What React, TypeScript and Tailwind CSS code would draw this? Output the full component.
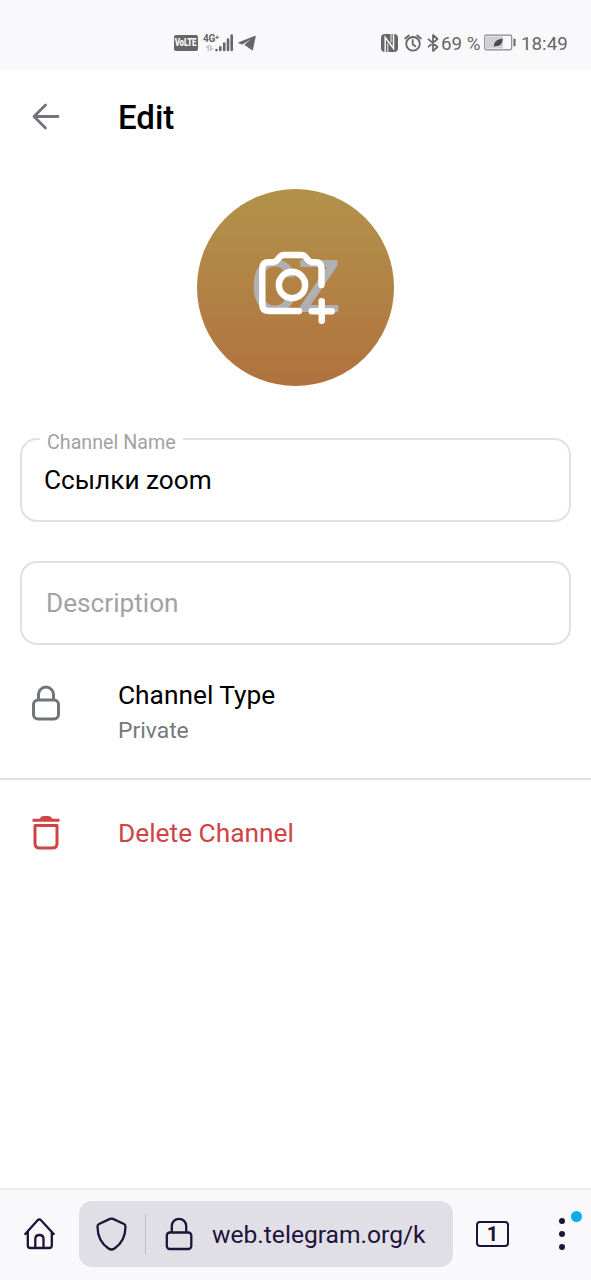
import React from 'react';

const StatusBar: React.FC = () => (
  <div className="h-[70px] bg-[#f9f9fb] flex items-center justify-between pl-[174px] pr-6 pt-4 text-[#666668]">
    <div className="flex items-center">
      <span className="w-6 h-4 rounded-[2px] bg-[#666668] text-[#f9f9fb] flex items-center justify-center leading-none">
        <span className="text-[10px] font-black tracking-tight scale-x-[0.8]">VoLTE</span>
      </span>
      <div className="flex flex-col items-start ml-[5px] w-[15px] h-[19px]">
        <span className="text-[10px] leading-[10px] font-bold tracking-tight whitespace-nowrap">4G⁺</span>
        <svg className="w-[7px] h-[6px] mt-px ml-[3px]" viewBox="0 0 7 6" fill="none" stroke="#b5b5b8" strokeWidth="1.2">
          <path d="M2.2 6V.8L.5 2.6M4.8 0v5.2l1.7-1.8" />
        </svg>
      </div>
      <svg className="w-[18px] h-[18px] -ml-[3px]" viewBox="0 0 18 18" stroke="currentColor" strokeWidth="2.6" strokeLinecap="round">
        <path d="M1.5 16v.1M5.3 13.2v2.8M9.2 9.5v6.5M13 5.5v10.5M16.7 1.5v14.5" />
      </svg>
      <svg className="w-[18px] h-[16px] ml-[5px]" viewBox="0 0 18 16" fill="currentColor">
        <path d="M17 .8c.6-.2.9.2.7.8L15 14.6c-.2.7-.8.8-1.3.4L6.3 9.8 13 4.2 4.2 9.4.8 8.300C.1 8 .1 7.500.8 7.200z" />
      </svg>
    </div>
    <div className="flex items-center text-[18.8px] leading-none">
      <svg className="w-[17px] h-[18px]" viewBox="0 0 17 18">
        <rect width="17" height="18" rx="4" fill="currentColor" />
        <path d="M4.200 18V3.500l8.300 11V0" fill="none" stroke="#f9f9fb" strokeWidth="1.5" />
        <path d="M6.800 18V9.500M10 0v8.500" fill="none" stroke="#f9f9fb" strokeWidth="1" />
      </svg>
      <svg className="w-[18px] h-[18px] ml-[6px]" viewBox="0 0 18 18" fill="none" stroke="currentColor" strokeWidth="1.8" strokeLinecap="round">
        <circle cx="9" cy="9.8" r="6.8" />
        <path d="M1.2 4.5 4.8 1.5M16.8 4.5 13.2 1.5M8.7 6v4.2l2.6 2" />
      </svg>
      <svg className="w-[12px] h-[18px] ml-[5px] mr-[2px]" viewBox="0 0 12 18" fill="none" stroke="currentColor" strokeWidth="1.7" strokeLinejoin="round">
        <path d="M1 4.8l9.5 8.2L6 17V1l4.500 4L1 13.2" />
      </svg>
      <span className="w-[38px] pt-[2px] whitespace-nowrap">69 %</span>
      <svg className="w-8 h-[17px] ml-[5px]" viewBox="0 0 32 17">
        <rect x=".7" y="1.2" width="27" height="14.6" rx="1.5" fill="none" stroke="#88888a" strokeWidth="1.2" />
        <rect x="2" y="2.5" width="17" height="12" fill="#d0d0d2" />
        <path d="M10 13c-.5-5 2.500-7.500 8.800-8.500C18.500 10 16 12.500 11.500 12z" fill="#4c4c4e" />
        <rect x="29.5" y="4.5" width="2" height="8" rx="1" fill="currentColor" />
      </svg>
      <span className="ml-[5px] w-[46px] pt-[2px] whitespace-nowrap">18:49</span>
    </div>
  </div>
);

const Header: React.FC = () => (
  <header className="h-[92px] flex items-center pl-8">
    <svg className="w-7 h-7" viewBox="0 0 28 28" fill="none" stroke="#707579" strokeWidth="2.8" strokeLinecap="round" strokeLinejoin="round">
      <path d="M26 14.500H2.500M13.500 2.900 2 14.500 13.500 26.100" />
    </svg>
    <h1 className="ml-[58px] pt-[2px] text-[33px] leading-none font-medium text-black">Edit</h1>
  </header>
);

const Avatar: React.FC = () => (
  <div className="relative mt-[27px] mx-auto w-[197px] h-[197px] rounded-full bg-gradient-to-b from-[#b2924a] to-[#b0723f] flex items-center justify-center">
    <span className="text-[72px] leading-none font-medium text-[#b0afb3]">CZ</span>
    <svg className="absolute left-[61px] top-[62px] w-[78px] h-[76px]" viewBox="0 0 78 76" fill="none" stroke="#fff" strokeWidth="6.4" strokeLinecap="round" strokeLinejoin="round">
      <path d="M63.5 34V17.5q0-6.3-6.3-6.3h-2.7q-2.5 0-4.2-2L47.5 6q-1.700-2-4.200-2H26q-2.500 0-4.200 2L19 9.200q-1.700 2-4.200 2H10.500q-6.200 0-6.200 6.300v36q0 6.500 6.500 6.500H41" />
      <circle cx="34" cy="34" r="13.2" />
      <path d="M53.8 60.3h20M63.7 50.2v19.6" />
    </svg>
  </div>
);

const ChannelForm: React.FC = () => (
  <div className="mt-[52px] px-5 flex flex-col gap-[39px]">
    <div className="relative h-[84px] rounded-[17px] border-2 border-[#dfe1e2] flex items-center pl-[22px] text-[26.2px] text-black">
      <span className="absolute left-[18px] top-[-7px] w-[143px] pl-[7px] bg-white text-[19.7px] leading-5 text-[#a2a2a2] whitespace-nowrap">
        Channel Name
      </span>
      <span className="pt-[2px]">Ссылки zoom</span>
    </div>
    <div className="h-[84px] pt-[2px] rounded-[17px] border-2 border-[#dfe1e2] flex items-center pl-6 text-[26.2px] text-[#a2a2a2]">
      Description
    </div>
  </div>
);

const Actions: React.FC = () => (
  <div>
    <div className="h-[135px] pt-8 pl-[31px] flex items-start border-b-2 border-[#dfe1e2]">
      <svg className="w-[30px] h-9 mt-2" viewBox="0 0 30 36" fill="none" stroke="#707579" strokeWidth="3">
        <rect x="2.5" y="15" width="25" height="19" rx="4.5" />
        <path d="M7.5 15V9.5a7.5 7.5 0 0 1 15 0V15" />
      </svg>
      <div className="ml-[57px]">
        <div className="text-[26.3px] leading-9 text-black">Channel Type</div>
        <div className="text-[22.9px] leading-9 text-[#75797c]">Private</div>
      </div>
    </div>
    <div className="h-[106px] pl-[31px] flex items-center text-[#d04448]">
      <svg className="w-[30px] h-9" viewBox="0 0 30 36" fill="none" stroke="currentColor" strokeWidth="3">
        <path d="M1.5 5.3h27M10 4q1-1.500 3-1.500h4q2 0 3 1.500" />
        <path d="M4 10.5h22v18q0 4.500-4.500 4.500h-13Q4 33 4 28.500z" strokeLinejoin="round" />
      </svg>
      <span className="ml-[57px] pt-[2px] text-[26.3px]">Delete Channel</span>
    </div>
  </div>
);

const BrowserBar: React.FC = () => (
  <footer className="mt-auto h-[92px] pb-[2px] border-t-2 border-[#ececef] bg-[#f9f9fb] flex items-center text-[#20123a]">
    <svg className="w-8 h-8 ml-6" viewBox="0 0 32 32" fill="none" stroke="currentColor" strokeWidth="2.3" strokeLinecap="round" strokeLinejoin="round">
      <path d="M1.3 16 13.6 2.300q1.700-1.800 3.400 0L29.700 16M3.800 14v13.500q0 2.500 2.500 2.500h18.800q2.700 0 2.700-2.500V14" />
      <path d="M11.3 29.500V21q0-4 4.100-4t4.100 4v8.500" />
    </svg>
    <div className="ml-[23px] w-[374px] h-[66px] rounded-[13px] bg-[#e0dfe6] flex items-center">
      <svg className="w-8 h-[34px] ml-[17px]" viewBox="0 0 32 34" fill="none" stroke="currentColor" strokeWidth="2.3" strokeLinejoin="round">
        <path d="M14 1.900q1.500-.7 3 0L28 7q1.500.7 1.500 2.500 0 14.500-11 22-3 2-6 0Q1.500 24 1.500 9.500 1.500 7.700 3 7z" />
      </svg>
      <div className="ml-[17px] w-px h-10 bg-[#bdbac6]" />
      <svg className="w-7 h-[34px] ml-[19px]" viewBox="0 0 28 34" fill="none" stroke="currentColor" strokeWidth="2.3">
        <rect x="1.8" y="15.5" width="24.5" height="16.5" rx="3" />
        <path d="M6.8 15.5V9a7.2 7.2 0 0 1 14.4 0v6.5" />
      </svg>
      <span className="ml-[19px] pt-[2px] text-[24.6px] whitespace-nowrap">web.telegram.org/k</span>
    </div>
    <div className="ml-[23px] w-[33px] h-[26px] rounded-[4px] border-2 border-[#20123a] flex items-center justify-center text-[20px] leading-none font-bold">
      1
    </div>
    <div className="relative ml-[50px] w-[6px] flex flex-col gap-[7px]">
      <span className="w-[6px] h-[6px] rounded-full bg-[#20123a]" />
      <span className="w-[6px] h-[6px] rounded-full bg-[#20123a]" />
      <span className="w-[6px] h-[6px] rounded-full bg-[#20123a]" />
      <span className="absolute left-3 top-[-7px] w-[11px] h-[11px] rounded-full bg-[#08aeea]" />
    </div>
  </footer>
);

const App: React.FC = () => {
  return (
    <div className="w-[591px] h-[1280px] overflow-hidden flex flex-col bg-white font-['Roboto',sans-serif]">
      <StatusBar />
      <Header />
      <main>
        <Avatar />
        <ChannelForm />
        <Actions />
      </main>
      <BrowserBar />
    </div>
  );
};

export default App;
